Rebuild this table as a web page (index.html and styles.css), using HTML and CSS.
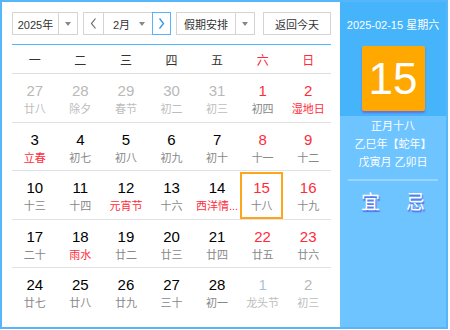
FILE: index.html
```html
<!DOCTYPE html>
<html lang="zh-CN">
<head>
<meta charset="utf-8">
<title>万年历</title>
<link rel="stylesheet" href="styles.css">
</head>
<body>
<div class="cal">
  <div class="main">
    <div class="toolbar">
      <div class="box year">
        <span class="val">2025年</span>
        <span class="drop"><i class="tri"></i></span>
      </div>
      <div class="box month">
        <span class="nav prev"><svg width="7" height="11" viewBox="0 0 7 11"><polyline points="5.5,0.5 1.5,5.5 5.5,10.5" fill="none" stroke="#666" stroke-width="1.2"/></svg></span>
        <span class="mval">2月<i class="tri"></i></span>
        <span class="nav next"><svg width="7" height="11" viewBox="0 0 7 11"><polyline points="1.5,0.5 5.5,5.5 1.5,10.5" fill="none" stroke="#2f95ee" stroke-width="1.3"/></svg></span>
      </div>
      <div class="box holiday">
        <span class="val">假期安排</span>
        <span class="drop"><i class="tri"></i></span>
      </div>
      <div class="box today">返回今天</div>
    </div>
    <div class="week">
      <span>一</span><span>二</span><span>三</span><span>四</span><span>五</span><span class="red">六</span><span class="red">日</span>
    </div>
    <div class="grid">
      <div class="row">
        <div class="day other"><b>27</b><s>廿八</s></div>
        <div class="day other"><b>28</b><s>除夕</s></div>
        <div class="day other"><b>29</b><s>春节</s></div>
        <div class="day other"><b>30</b><s>初二</s></div>
        <div class="day other"><b>31</b><s>初三</s></div>
        <div class="day wk"><b>1</b><s>初四</s></div>
        <div class="day wk"><b>2</b><s class="fest">湿地日</s></div>
      </div>
      <div class="row">
        <div class="day"><b>3</b><s class="fest">立春</s></div>
        <div class="day"><b>4</b><s>初七</s></div>
        <div class="day"><b>5</b><s>初八</s></div>
        <div class="day"><b>6</b><s>初九</s></div>
        <div class="day"><b>7</b><s>初十</s></div>
        <div class="day wk"><b>8</b><s>十一</s></div>
        <div class="day wk"><b>9</b><s>十二</s></div>
      </div>
      <div class="row">
        <div class="day"><b>10</b><s>十三</s></div>
        <div class="day"><b>11</b><s>十四</s></div>
        <div class="day"><b>12</b><s class="fest">元宵节</s></div>
        <div class="day"><b>13</b><s>十六</s></div>
        <div class="day"><b>14</b><s class="fest" title="西洋情人节">西洋情...</s></div>
        <div class="day wk selected"><b>15</b><s>十八</s></div>
        <div class="day wk"><b>16</b><s>十九</s></div>
      </div>
      <div class="row">
        <div class="day"><b>17</b><s>二十</s></div>
        <div class="day"><b>18</b><s class="fest">雨水</s></div>
        <div class="day"><b>19</b><s>廿二</s></div>
        <div class="day"><b>20</b><s>廿三</s></div>
        <div class="day"><b>21</b><s>廿四</s></div>
        <div class="day wk"><b>22</b><s>廿五</s></div>
        <div class="day wk"><b>23</b><s>廿六</s></div>
      </div>
      <div class="row last">
        <div class="day"><b>24</b><s>廿七</s></div>
        <div class="day"><b>25</b><s>廿八</s></div>
        <div class="day"><b>26</b><s>廿九</s></div>
        <div class="day"><b>27</b><s>三十</s></div>
        <div class="day"><b>28</b><s>初一</s></div>
        <div class="day other next1"><b>1</b><s>龙头节</s></div>
        <div class="day other"><b>2</b><s>初三</s></div>
      </div>
    </div>
  </div>
  <div class="side">
    <div class="side-top">
      <div class="date">2025-02-15 星期六</div>
      <div class="big">15</div>
    </div>
    <div class="side-bottom">
      <div class="lunar">正月十八</div>
      <div class="lunar">乙巳年【蛇年】</div>
      <div class="lunar">戊寅月 乙卯日</div>
      <div class="divider"></div>
      <div class="yiji"><span>宜</span><span>忌</span></div>
    </div>
  </div>
</div>
</body>
</html>
```

FILE: styles.css
```css
html, body {
  margin: 0;
  padding: 0;
  background: #fff;
}
body {
  font-family: "Liberation Sans", "Noto Sans CJK SC", sans-serif;
  color: #333;
}
.cal {
  width: 448px;
  height: 329px;
  border: 2px solid #55b6fc;
  box-sizing: border-box;
  display: flex;
}
.main {
  width: 338px;
  padding: 10px 9px 0 10px;
  box-sizing: border-box;
  background: #fff;
}
.toolbar {
  display: flex;
  height: 23px;
}
.box {
  display: flex;
  align-items: stretch;
  height: 23px;
  border: 1px solid #d4d4d4;
  box-sizing: border-box;
  font-size: 11px;
  color: #333;
  background: #fff;
}
.box .val {
  display: flex;
  align-items: center;
  justify-content: center;
  border-right: 1px solid #d4d4d4;
}
.box .drop {
  flex: 1;
  display: flex;
  align-items: center;
  justify-content: center;
}
.tri {
  display: inline-block;
  width: 0;
  height: 0;
  border-left: 3.5px solid transparent;
  border-right: 3.5px solid transparent;
  border-top: 4px solid #888;
}
.year {
  width: 66px;
}
.year .val {
  width: 45px;
}
.month {
  width: 88px;
  margin-left: 5px;
  border-right: none;
}
.nav {
  width: 19px;
  display: flex;
  align-items: center;
  justify-content: center;
}
.prev {
  border-right: 1px solid #d4d4d4;
}
.mval {
  flex: 1;
  display: flex;
  align-items: center;
  padding-left: 9px;
  padding-right: 7px;
}
.mval .tri {
  margin-left: auto;
}
.next {
  border: 1px solid #55b3ff;
  margin: -1px 0;
  width: 19px;
  box-sizing: border-box;
}
.holiday {
  width: 79px;
  margin-left: 5px;
}
.holiday .val {
  width: 58px;
}
.today {
  width: 68px;
  margin-left: 8px;
  align-items: center;
  justify-content: center;
}
.week {
  margin-top: 9px;
  border-top: 1px solid #4fb5ff;
  border-bottom: 1px solid #dedede;
  height: 30px;
  box-sizing: border-box;
  display: grid;
  grid-template-columns: repeat(7, 1fr);
  align-items: center;
  font-size: 12px;
  color: #333;
  text-align: center;
}
.red {
  color: #ff2b3a;
}
.row {
  display: grid;
  grid-template-columns: repeat(7, 1fr);
  height: 48.5px;
  border-bottom: 1px solid #e2e2e2;
  box-sizing: border-box;
}
.row.last {
  border-bottom: none;
}
.day {
  display: flex;
  flex-direction: column;
  align-items: center;
  padding-top: 7px;
  min-width: 0;
}
.day b {
  font-weight: normal;
  font-size: 15px;
  line-height: 20px;
  color: #000;
}
.day s {
  text-decoration: none;
  font-size: 11px;
  line-height: 16px;
  color: #888;
  white-space: nowrap;
}
.day.wk b {
  color: #ff2b3a;
}
.day s.fest {
  color: #ff2b3a;
}
.day.other b {
  color: #b9b9b9;
}
.day.other s {
  color: #bdbdbd;
}
.day.next1 b {
  color: #a9c3dd;
}
.day.selected {
  border: 2px solid #ffa51c;
  margin: 1px 2px 0 0;
  padding-top: 4px;
}
.side {
  width: 106px;
  display: flex;
  flex-direction: column;
  color: #fff;
  text-align: center;
}
.side-top {
  height: 114px;
  background: #45b4fb;
  padding-top: 16px;
  box-sizing: border-box;
}
.date {
  font-size: 11px;
  line-height: 14px;
}
.big {
  width: 63px;
  height: 65px;
  margin: 14px auto 0;
  background: #ffa800;
  border-radius: 2px;
  box-shadow: 0 2px 2px rgba(110, 90, 230, 0.75);
  font-size: 44px;
  line-height: 65px;
  color: #fff;
}
.side-bottom {
  flex: 1;
  background: #6ec4ff;
  padding-top: 1px;
}
.lunar {
  font-size: 11px;
  line-height: 18px;
}
.divider {
  margin: 8px 8px 0;
  height: 2px;
  background: rgba(255, 255, 255, 0.3);
}
.yiji {
  margin-top: 10px;
  display: flex;
  justify-content: center;
  gap: 26px;
  font-size: 19px;
  line-height: 24px;
  text-shadow: 1px 2px 1px rgba(95, 80, 230, 0.8);
}
```
